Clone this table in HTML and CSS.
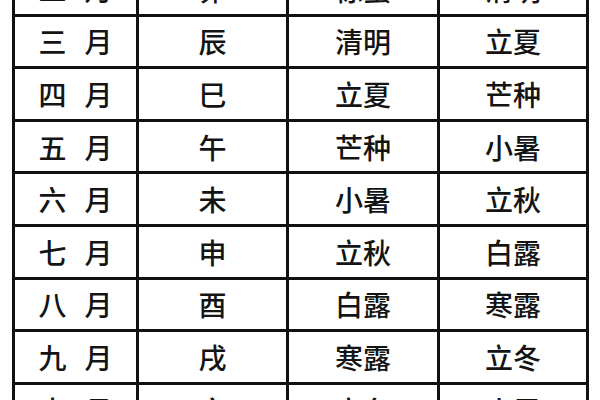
FILE: index.html
```html
<!DOCTYPE html>
<html lang="zh">
<head>
<meta charset="utf-8">
<link rel="stylesheet" href="styles.css">
</head>
<body>
<div class="table">
  <div class="cell month"><span>二</span><span>月</span></div><div class="cell">卯</div><div class="cell">惊蛰</div><div class="cell">清明</div>
  <div class="cell month"><span>三</span><span>月</span></div><div class="cell">辰</div><div class="cell">清明</div><div class="cell">立夏</div>
  <div class="cell month"><span>四</span><span>月</span></div><div class="cell">巳</div><div class="cell">立夏</div><div class="cell">芒种</div>
  <div class="cell month"><span>五</span><span>月</span></div><div class="cell">午</div><div class="cell">芒种</div><div class="cell">小暑</div>
  <div class="cell month"><span>六</span><span>月</span></div><div class="cell">未</div><div class="cell">小暑</div><div class="cell">立秋</div>
  <div class="cell month"><span>七</span><span>月</span></div><div class="cell">申</div><div class="cell">立秋</div><div class="cell">白露</div>
  <div class="cell month"><span>八</span><span>月</span></div><div class="cell">酉</div><div class="cell">白露</div><div class="cell">寒露</div>
  <div class="cell month"><span>九</span><span>月</span></div><div class="cell">戌</div><div class="cell">寒露</div><div class="cell">立冬</div>
  <div class="cell month"><span>十</span><span>月</span></div><div class="cell">亥</div><div class="cell">立冬</div><div class="cell">小雪</div>
</div>
</body>
</html>
```
FILE: styles.css
```css
html, body {
  margin: 0;
  padding: 0;
  background: #ffffff;
  overflow: hidden;
}
body {
  width: 600px;
  height: 400px;
}
.table {
  display: grid;
  grid-template-columns: 121px 147px 148px 146px;
  grid-auto-rows: 49.6px;
  gap: 3px;
  padding: 3px;
  background: #111111;
  width: max-content;
  margin-left: 12px;
  margin-top: -39px;
  font-family: "Noto Sans CJK SC", "Noto Sans CJK TC", sans-serif;
  font-size: 28px;
  font-weight: 500;
  color: #141414;
}
.cell {
  background: #ffffff;
  display: flex;
  align-items: center;
  justify-content: center;
  line-height: 1;
}
.month {
  gap: 18px;
}
```
